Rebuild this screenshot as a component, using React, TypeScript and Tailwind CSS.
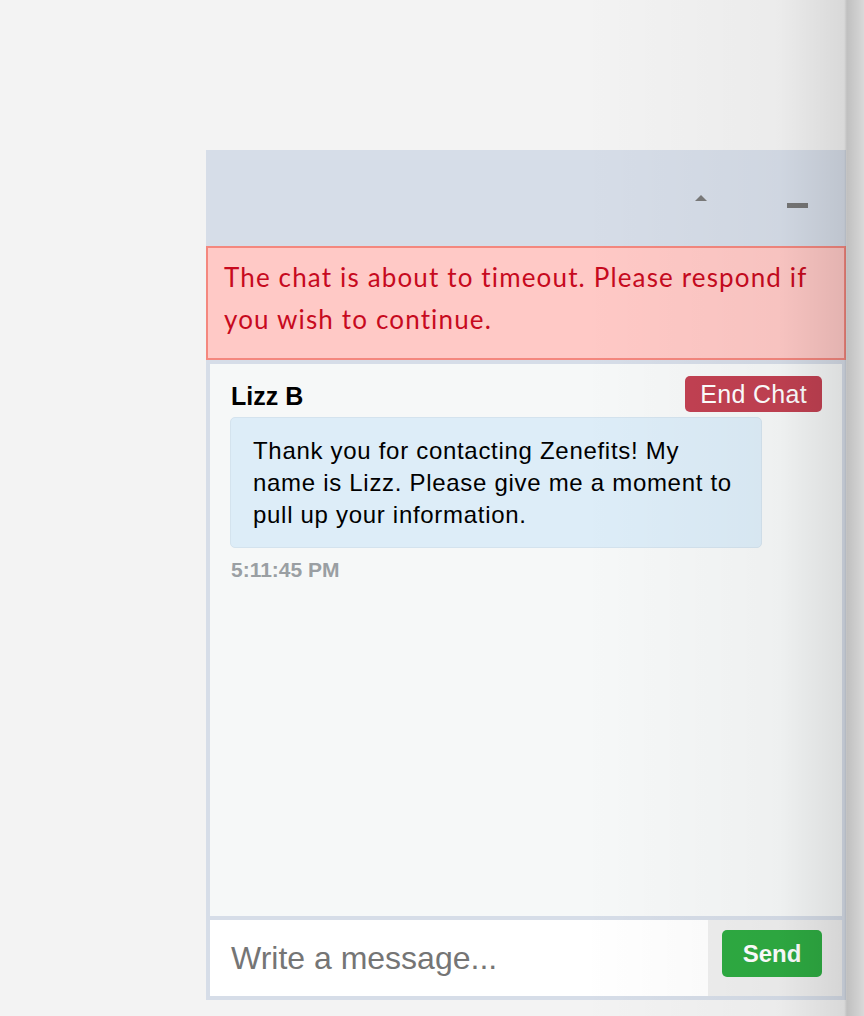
import React from 'react';

/**
 * Chat widget with a timeout warning, one agent message and the compose row.
 */
export default function App() {
  return (
    <div className="relative h-[1016px] w-[864px] overflow-hidden bg-[#f3f3f3]">
      <div className="ml-[206px] mt-[150px] flex h-[850px] w-[640px] flex-col bg-[#d6dde8]">
        {/* header */}
        <div className="relative h-[96px] shrink-0">
          <svg className="absolute left-[488px] top-[44px]" width="14" height="8" viewBox="0 0 14 8">
            <path d="M7 1 L13 7 L1 7 Z" fill="#7a7a7a" />
          </svg>
          <div className="absolute left-[581px] top-[53px] h-[5px] w-[21px] bg-[#777]" />
        </div>

        {/* timeout warning */}
        <div className="shrink-0 border-2 border-[#f4877e] bg-[#ffc9c6] pb-[18px] pl-[16px] pr-[20px] pt-[8px] font-['Lato',sans-serif] text-[26px] leading-[42px] tracking-[1.15px] text-[#c70a1e]">
          The chat is about to timeout. Please respond if you wish to continue.
        </div>

        {/* messages */}
        <div className="mx-[4px] mt-[4px] flex-1 bg-[#f6f8f8] px-[20px] pt-[12px] font-['Liberation_Sans',Arial,sans-serif]">
          <div className="flex items-start justify-between">
            <div className="pl-[1px] pt-[6px] text-[25px] font-bold leading-[28px] text-black">Lizz B</div>
            <button className="h-[36px] rounded-[5px] bg-[#c24152] px-[15px] text-[25px] leading-[36px] tracking-[0.3px] text-white">
              End Chat
            </button>
          </div>
          <div className="mt-[5px] w-[532px] rounded-[5px] border border-[#d4e3ee] bg-[#ddedf8] pb-[16px] pl-[22px] pr-[20px] pt-[17px] text-[24px] leading-[32px] tracking-[0.7px] text-black">
            Thank you for contacting Zenefits! My name is Lizz. Please give me a moment to pull up your information.
          </div>
          <div className="mt-[9px] pl-[1px] text-[21px] font-bold leading-[26px] text-[#9a9fa3]">5:11:45 PM</div>
        </div>

        {/* compose */}
        <div className="mx-[4px] mb-[4px] mt-[4px] flex h-[76px] shrink-0 font-['Liberation_Sans',Arial,sans-serif]">
          <div className="flex flex-1 items-center bg-white pl-[21px]">
            <span className="text-[32px] text-[#757575]">Write a message...</span>
          </div>
          <div className="flex w-[134px] items-start bg-[#efefef] pl-[14px] pt-[10px]">
            <button className="h-[47px] w-[100px] rounded-[5px] bg-[#2eab42] text-[24px] font-bold text-white">Send</button>
          </div>
        </div>
      </div>

      {/* edge shadow */}
      <div className="pointer-events-none absolute inset-y-0 left-[580px] right-0 bg-[linear-gradient(to_right,rgba(0,0,0,0)_0%,rgba(0,0,0,0.03)_70%,rgba(0,0,0,0.11)_93%,rgba(0,0,0,0.21)_94%,rgba(0,0,0,0.11)_100%)]" />
    </div>
  );
}
